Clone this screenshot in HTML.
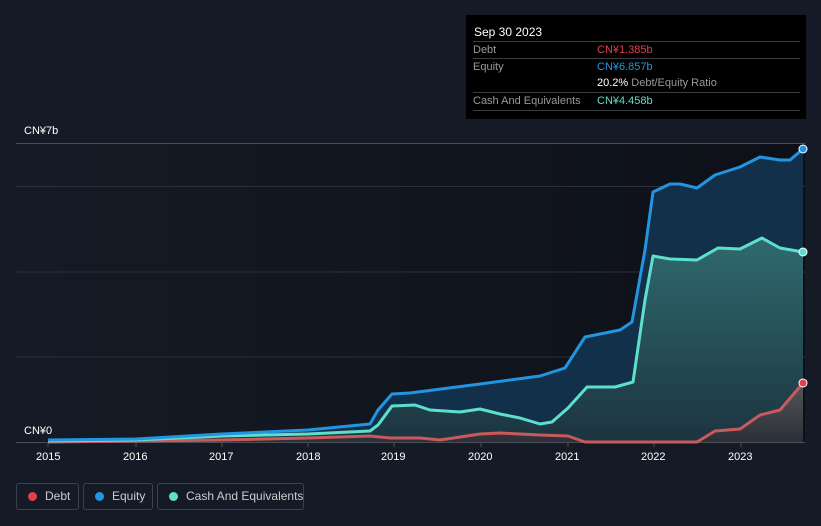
<!DOCTYPE html>
<html><head><style>
html,body{margin:0;width:821px;height:526px;overflow:hidden}
body{background:#151b26;font-family:"Liberation Sans",sans-serif;position:relative}
.tt{position:absolute;left:466px;top:15px;width:340px;height:104px;background:#000;color:#fff;font-size:11px}
.tt .h{position:absolute;left:8px;top:10px;font-size:12px}
.row{position:absolute;left:7px;width:327px;border-top:1px solid #3a3d44;height:17px;line-height:17px;color:#999}
.row span{position:absolute;left:124px}
.lg{position:absolute;top:483px;height:27px;border:1px solid #3b414c;border-radius:3px;color:#ccc;font-size:12px;line-height:25px;box-sizing:border-box;white-space:nowrap}
.lg i{position:absolute;left:11px;top:8px;width:9px;height:9px;border-radius:50%}
.ax{position:absolute;color:#fff;font-size:11px}
</style></head><body>
<svg width="821" height="526" style="position:absolute;left:0;top:0">
<defs>
<linearGradient id="bg" x1="0" x2="1" y1="0" y2="0"><stop offset="0" stop-color="#151b26"/><stop offset="1" stop-color="#0d1017"/></linearGradient>
<linearGradient id="cg" x1="0" x2="0" y1="0" y2="1"><stop offset="0" stop-color="#2f6a6e"/><stop offset="1" stop-color="#1c3440"/></linearGradient>
<linearGradient id="dg" x1="0" x2="0" y1="0" y2="1"><stop offset="0" stop-color="#55565c"/><stop offset="1" stop-color="#2c2f38"/></linearGradient>
</defs>
<rect x="16" y="143" width="789" height="299" fill="url(#bg)"/>
<g stroke="#2a2f38" stroke-width="1"><line x1="16" x2="805" y1="186.5" y2="186.5"/><line x1="16" x2="805" y1="272" y2="272"/><line x1="16" x2="805" y1="357" y2="357"/></g>
<line x1="16" x2="805" y1="143.5" y2="143.5" stroke="#4a4e57"/>
<line x1="16" x2="805" y1="442.5" y2="442.5" stroke="#4a4e57"/>
<g stroke="#4a4e57"><line x1="48" x2="48" y1="442" y2="447"/><line x1="136" x2="136" y1="442" y2="447"/><line x1="222" x2="222" y1="442" y2="447"/><line x1="308" x2="308" y1="442" y2="447"/><line x1="394" x2="394" y1="442" y2="447"/><line x1="481" x2="481" y1="442" y2="447"/><line x1="568" x2="568" y1="442" y2="447"/><line x1="654" x2="654" y1="442" y2="447"/><line x1="741" x2="741" y1="442" y2="447"/></g>
<path d="M48,440 L136,439 L222,434 L308,430 L370,424 L378,410 L392,394 L410,393 L480,384 L540,376 L565,368 L585,337 L600,334 L620,330 L632,322 L645,250 L653,192 L670,184 L680,184 L697,188 L715,175 L740,167 L760,157 L780,160 L790,160 L803,149 L803,442 L48,442Z" fill="#12304a"/>
<path d="M48,441 L136,440 L222,436 L308,434 L370,431 L378,425 L392,406 L415,405 L430,410 L460,412 L480,409 L500,414 L520,418 L540,424 L552,422 L568,408 L587,387 L615,387 L633,382 L645,300 L653,256 L670,259 L697,260 L718,248 L740,249 L762,238 L780,248 L803,252 L803,442 L48,442Z" fill="url(#cg)"/>
<path d="M48,442 L222,440 L308,438 L370,436 L390,438 L420,438 L440,440 L480,434 L500,433 L520,434 L540,435 L568,436 L585,442 L697,442 L715,431 L740,429 L760,415 L780,410 L803,383 L803,442Z" fill="url(#dg)"/>
<g fill="none" stroke-width="3" stroke-linejoin="round">
<path d="M48,442 L222,440 L308,438 L370,436 L390,438 L420,438 L440,440 L480,434 L500,433 L520,434 L540,435 L568,436 L585,442 L697,442 L715,431 L740,429 L760,415 L780,410 L803,383" stroke="#c85a5e"/>
<path d="M48,441 L136,440 L222,436 L308,434 L370,431 L378,425 L392,406 L415,405 L430,410 L460,412 L480,409 L500,414 L520,418 L540,424 L552,422 L568,408 L587,387 L615,387 L633,382 L645,300 L653,256 L670,259 L697,260 L718,248 L740,249 L762,238 L780,248 L803,252" stroke="#5ce0cc"/>
<path d="M48,440 L136,439 L222,434 L308,430 L370,424 L378,410 L392,394 L410,393 L480,384 L540,376 L565,368 L585,337 L600,334 L620,330 L632,322 L645,250 L653,192 L670,184 L680,184 L697,188 L715,175 L740,167 L760,157 L780,160 L790,160 L803,149" stroke="#2394e0"/>
</g>
<circle cx="803" cy="149" r="4" fill="#2394e0" stroke="#fff" stroke-width="1"/>
<circle cx="803" cy="252" r="4" fill="#5ce0cc" stroke="#fff" stroke-width="1"/>
<circle cx="803" cy="383" r="4" fill="#e0404a" stroke="#fff" stroke-width="1"/>
</svg>
<div class="ax" style="left:24px;top:125px">CN¥7b</div>
<div class="ax" style="left:24px;top:425px">CN¥0</div>
<div class="ax" style="left:36px;top:451px">2015</div>
<div class="ax" style="left:123px;top:451px">2016</div>
<div class="ax" style="left:209px;top:451px">2017</div>
<div class="ax" style="left:296px;top:451px">2018</div>
<div class="ax" style="left:381px;top:451px">2019</div>
<div class="ax" style="left:468px;top:451px">2020</div>
<div class="ax" style="left:555px;top:451px">2021</div>
<div class="ax" style="left:641px;top:451px">2022</div>
<div class="ax" style="left:728px;top:451px">2023</div>
<div class="tt">
<div class="h">Sep 30 2023</div>
<div class="row" style="top:26px">Debt<span style="color:#e0404a">CN¥1.385b</span></div>
<div class="row" style="top:43px">Equity<span style="color:#2394e0">CN¥6.857b</span></div>
<div class="row" style="top:60px;border-top:none"><span><b style="color:#fff;font-weight:normal">20.2%</b> Debt/Equity Ratio</span></div>
<div class="row" style="top:77px">Cash And Equivalents<span style="color:#5ce0cc">CN¥4.458b</span></div>
<div class="row" style="top:95px;height:0"></div>
</div>
<div class="lg" style="left:16px;width:63px"><i style="background:#e0404a"></i><span style="position:absolute;left:28px">Debt</span></div>
<div class="lg" style="left:83px;width:70px"><i style="background:#2394e0"></i><span style="position:absolute;left:28px">Equity</span></div>
<div class="lg" style="left:157px;width:147px"><i style="background:#5ce0cc"></i><span style="position:absolute;left:28px">Cash And Equivalents</span></div>
</body></html>
